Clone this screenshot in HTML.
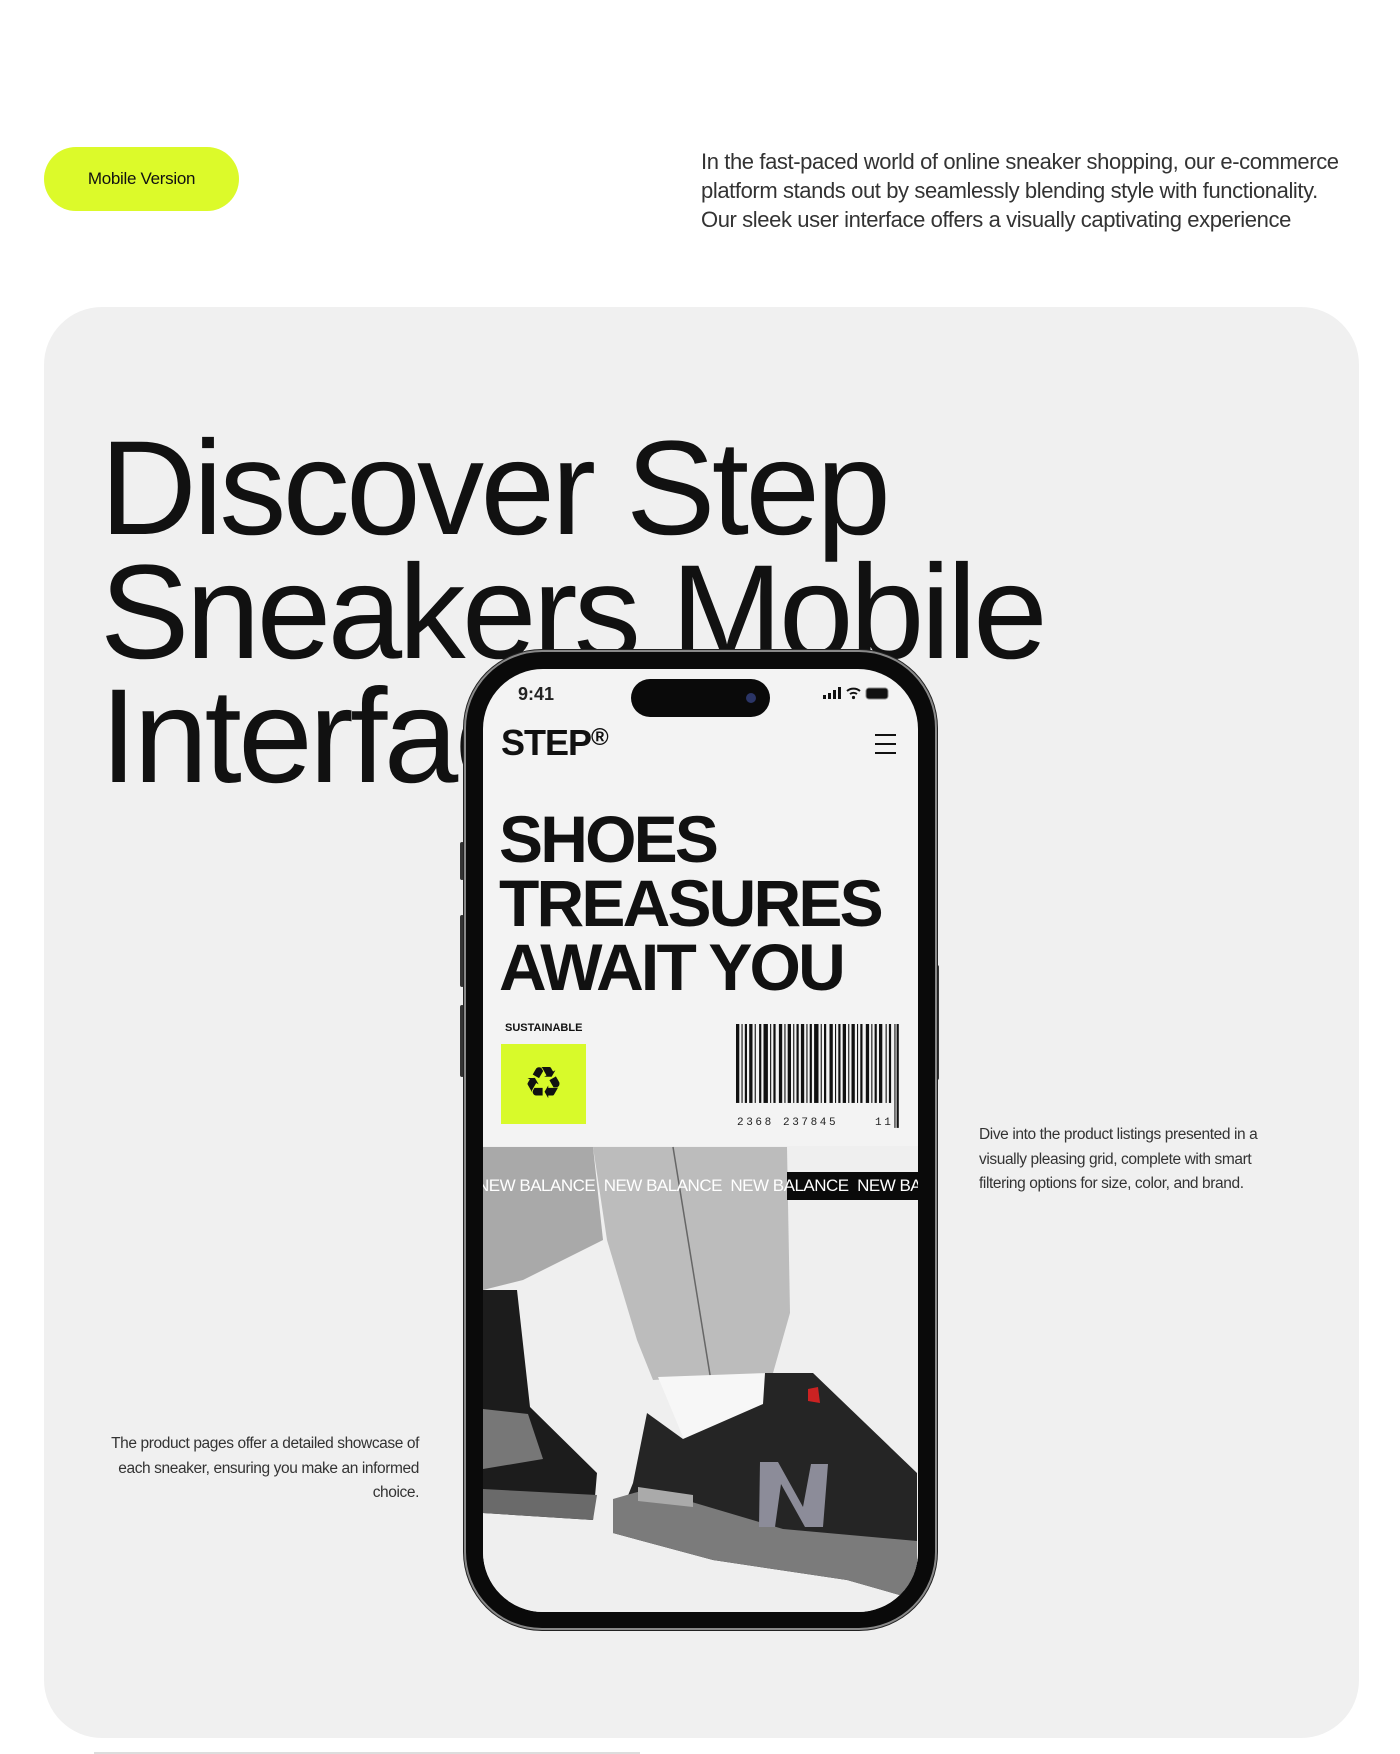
<!DOCTYPE html>
<html><head><meta charset="utf-8"><style>
*{margin:0;padding:0;box-sizing:border-box}
body{width:1400px;height:1754px;background:#fff;position:relative;overflow:hidden;font-family:"Liberation Sans",sans-serif;color:#111}
.pill{position:absolute;left:44px;top:147px;width:195px;height:64px;border-radius:32px;background:#dcfa2a;font-size:17px;line-height:64px;text-align:center;letter-spacing:-0.3px}
.intro{position:absolute;left:701px;top:147px;font-size:22px;line-height:29px;color:#333;letter-spacing:-0.4px;white-space:nowrap}
.card{position:absolute;left:44px;top:307px;width:1315px;height:1431px;border-radius:58px;background:#f0f0f0}
.h1{position:absolute;left:100px;top:427px;font-size:134px;line-height:124px;letter-spacing:-3.6px;color:#111;white-space:nowrap}
.side{position:absolute;font-size:15.5px;line-height:24.5px;color:#333;letter-spacing:-0.4px}
.phone{position:absolute;left:464px;top:650px;width:473px;height:980px;border-radius:78px;background:#0a0a0a;border:2px solid #888;box-shadow:0 0 0 1px #222}
.screen{position:absolute;left:483px;top:669px;width:435px;height:943px;border-radius:60px;background:#f3f3f3;overflow:hidden}
.btn{position:absolute;width:4px;background:#333;border-radius:2px}
</style></head><body>
<div class="pill">Mobile Version</div>
<div class="intro">In the fast-paced world of online sneaker shopping, our e-commerce<br>platform stands out by seamlessly blending style with functionality.<br>Our sleek user interface offers a visually captivating experience</div>
<div class="card"></div>
<div class="h1">Discover Step<br>Sneakers Mobile<br>Interface</div>
<div class="side" style="left:979px;top:1123px;width:300px">Dive into the product listings presented in a visually pleasing grid, complete with smart filtering options for size, color, and brand.</div>
<div class="side" style="left:100px;top:1432px;width:319px;text-align:right">The product pages offer a detailed showcase of each sneaker, ensuring you make an informed choice.</div>
<div class="btn" style="left:460px;top:842px;height:38px"></div>
<div class="btn" style="left:460px;top:915px;height:72px"></div>
<div class="btn" style="left:460px;top:1005px;height:72px"></div>
<div class="btn" style="left:935px;top:965px;height:115px"></div>
<div class="phone"></div>
<div class="screen">
 <div style="position:absolute;left:35px;top:15px;font-size:18px;font-weight:bold;color:#222">9:41</div>
 <div style="position:absolute;left:148px;top:10px;width:139px;height:38px;border-radius:19px;background:#0a0a0a"><div style="position:absolute;right:14px;top:14px;width:10px;height:10px;border-radius:5px;background:#2b3566"></div></div>
 <svg style="position:absolute;left:340px;top:16px" width="75" height="16" viewBox="0 0 75 16">
  <rect x="0" y="10" width="3" height="4" fill="#111"/><rect x="5" y="8" width="3" height="6" fill="#111"/><rect x="10" y="5" width="3" height="9" fill="#111"/><rect x="15" y="2" width="3" height="12" fill="#111"/>
  <path d="M24 6a10 10 0 0 1 13 0M27 9a6 6 0 0 1 7 0" stroke="#111" stroke-width="2" fill="none"/><circle cx="30.5" cy="12.5" r="1.6" fill="#111"/>
  <rect x="43" y="3" width="22" height="11" rx="3" fill="#111" stroke="#888" stroke-width="1"/>
 </svg>
 <div style="position:absolute;left:18px;top:53px;font-size:36px;font-weight:bold;letter-spacing:-1px">STEP<span style="font-size:24px;vertical-align:10px">®</span></div>
 <div style="position:absolute;left:392px;top:74px;width:21px;height:2px;background:#111;box-shadow:0 -9px 0 #111,0 9px 0 #111"></div>
 <div style="position:absolute;left:16px;top:138px;font-size:66px;line-height:64px;font-weight:bold;letter-spacing:-2.8px;white-space:nowrap">SHOES<br>TREASURES<br>AWAIT YOU</div>
 <div style="position:absolute;left:22px;top:353px;font-size:11px;font-weight:bold">SUSTAINABLE</div>
 <div style="position:absolute;left:18px;top:375px;width:85px;height:80px;background:#d8fa2a;font-size:44px;line-height:80px;text-align:center">♻</div>
 <svg style="position:absolute;left:253px;top:355px" width="165" height="107" viewBox="0 0 150 103" preserveAspectRatio="none">
  <g fill="#111">
  <rect x="0" y="0" width="3" height="76"/><rect x="5" y="0" width="1" height="76"/><rect x="8" y="0" width="2" height="76"/><rect x="12" y="0" width="3" height="76"/><rect x="17" y="0" width="1" height="76"/><rect x="21" y="0" width="2" height="76"/><rect x="25" y="0" width="4" height="76"/><rect x="31" y="0" width="1" height="76"/><rect x="34" y="0" width="2" height="76"/><rect x="39" y="0" width="3" height="76"/><rect x="44" y="0" width="1" height="76"/><rect x="47" y="0" width="3" height="76"/><rect x="52" y="0" width="1" height="76"/><rect x="55" y="0" width="2" height="76"/><rect x="59" y="0" width="3" height="76"/><rect x="64" y="0" width="1" height="76"/><rect x="67" y="0" width="2" height="76"/><rect x="71" y="0" width="4" height="76"/><rect x="77" y="0" width="1" height="76"/><rect x="80" y="0" width="2" height="76"/><rect x="85" y="0" width="3" height="76"/><rect x="90" y="0" width="1" height="76"/><rect x="93" y="0" width="2" height="76"/><rect x="97" y="0" width="3" height="76"/><rect x="102" y="0" width="1" height="76"/><rect x="105" y="0" width="3" height="76"/><rect x="110" y="0" width="1" height="76"/><rect x="113" y="0" width="2" height="76"/><rect x="118" y="0" width="3" height="76"/><rect x="123" y="0" width="1" height="76"/><rect x="126" y="0" width="2" height="76"/><rect x="130" y="0" width="3" height="76"/><rect x="136" y="0" width="1" height="76"/><rect x="139" y="0" width="2" height="76"/><rect x="144" y="0" width="1" height="100"/><rect x="146" y="0" width="2" height="100"/></g>
 </svg>
 <div style="position:absolute;left:254px;top:448px;font-family:'Liberation Mono',monospace;font-size:11px;letter-spacing:2.6px;color:#222;white-space:pre">2368 237845    11</div>
 <svg style="position:absolute;left:0;top:477px" width="435" height="466" viewBox="0 477 435 466">
  <rect x="0" y="477" width="435" height="466" fill="#efefef"/>
  <polygon points="0,478 110,478 120,571 40,611 0,621" fill="#a9a9a9"/>
  <polygon points="110,478 304,478 307,644 290,704 170,711 154,671 124,571" fill="#bcbcbc"/>
  <path d="M190 478 L228 712" stroke="#666" stroke-width="1.5"/>
  <polygon points="175,708 285,704 292,760 205,780" fill="#f7f7f7"/>
  <polygon points="0,621 34,621 47,738 114,804 110,851 0,844" fill="#1c1c1c"/>
  <polygon points="0,740 45,745 60,790 0,800" fill="#777"/>
  <polygon points="0,820 114,826 110,851 0,844" fill="#6a6a6a"/>
  <polygon points="164,744 200,770 280,735 282,704 330,704 434,804 434,931 364,911 230,891 130,864 150,814" fill="#252525"/>
  <polygon points="130,830 165,820 300,860 434,872 434,931 364,911 230,891 130,864" fill="#7b7b7b"/>
  <polygon points="155,818 210,826 210,838 155,832" fill="#aaa"/>
  <polygon points="277,793 295,793 320,838 328,795 345,795 340,858 322,858 298,815 292,858 276,858" fill="#8c8c99"/>
  <polygon points="325,720 335,718 337,734 325,732" fill="#c22"/>
 </svg>
 <div style="position:absolute;left:304px;top:503px;width:131px;height:28px;background:#0a0a0a"></div>
 <div style="position:absolute;left:-6px;top:505px;font-size:17px;line-height:24px;color:#fff;white-space:nowrap;letter-spacing:-0.5px">NEW BALANCE &nbsp;NEW BALANCE &nbsp;NEW BALANCE &nbsp;NEW BALANCE</div>
</div>
<div style="position:absolute;left:94px;top:1752px;width:546px;height:2px;background:#ddd"></div>
</body></html>
